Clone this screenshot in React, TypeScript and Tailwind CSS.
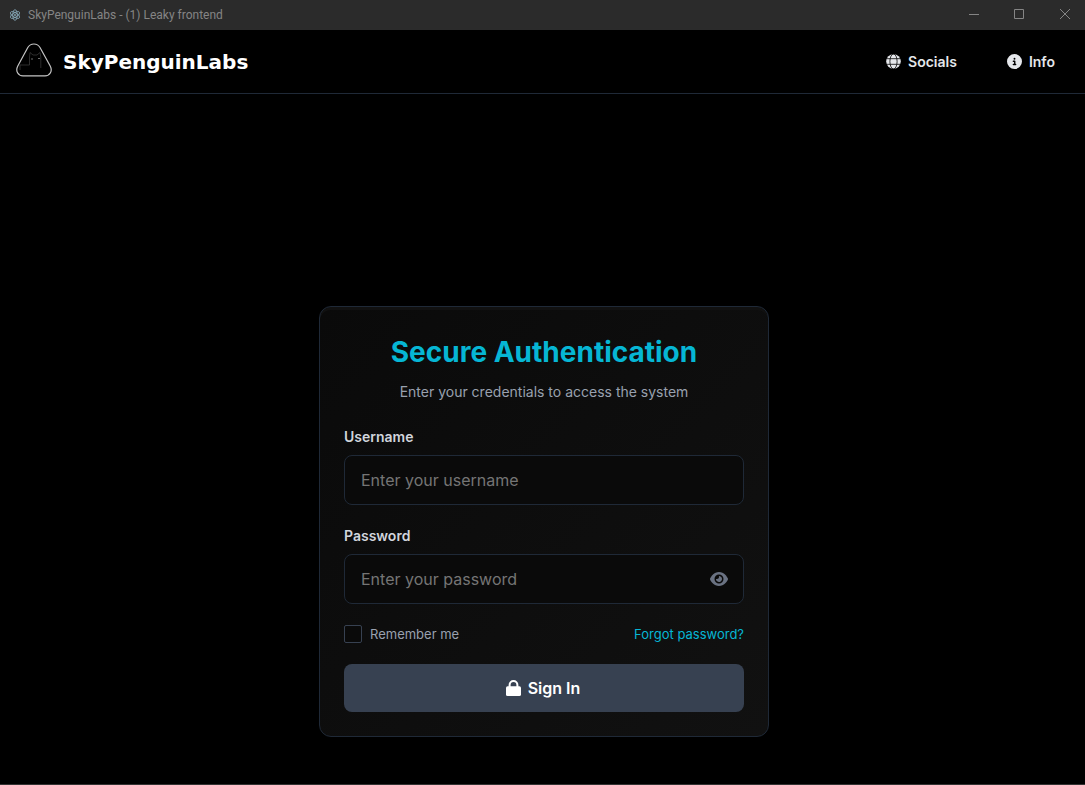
import { useState } from 'react';
import { FaCircleInfo, FaEye } from 'react-icons/fa6';

function AppIcon() {
  return (
    <svg width="12" height="12" viewBox="0 0 24 24" fill="none" stroke="#8fb3c4" strokeWidth="1.5" aria-hidden="true">
      <ellipse cx="12" cy="12" rx="10.5" ry="4.4" transform="rotate(30 12 12)" />
      <ellipse cx="12" cy="12" rx="10.5" ry="4.4" transform="rotate(90 12 12)" />
      <ellipse cx="12" cy="12" rx="10.5" ry="4.4" transform="rotate(150 12 12)" />
      <circle cx="12" cy="12" r="1.2" fill="#8fb3c4" />
    </svg>
  );
}

function GlobeIcon() {
  return (
    <svg width="15" height="15" viewBox="0 0 15 15" fill="none" aria-hidden="true">
      <circle cx="7.5" cy="7.5" r="7.3" fill="currentColor" />
      <g stroke="#000000" strokeWidth=".8">
        <ellipse cx="7.5" cy="7.5" rx="3.6" ry="7.5" />
        <path d="M0 4.7h15M0 10.300h15" />
      </g>
    </svg>
  );
}

function LockIcon() {
  return (
    <svg width="15" height="16" viewBox="0 0 15 16" fill="none" aria-hidden="true">
      <path d="M3.600 7V4.900a3.900 3.900 0 0 1 7.800 0V7" stroke="currentColor" strokeWidth="2" />
      <rect y="6.200" width="15" height="9.800" rx="1.600" fill="currentColor" />
    </svg>
  );
}

function TitleBar() {
  return (
    <div className="flex h-[30px] shrink-0 items-center justify-between bg-[#2b2b2b] font-['Roboto',sans-serif] text-[#858585]">
      <div className="flex items-center gap-[7px] pl-[9px]">
        <AppIcon />
        <span className="text-[12px] leading-[16px]">SkyPenguinLabs - (1) Leaky frontend</span>
      </div>
      <div className="flex h-full">
        <button aria-label="Minimize" className="flex h-full w-[45px] items-center justify-center pb-[2px] pl-[2px]">
          <svg width="10" height="10" viewBox="0 0 10 10" stroke="#858585" fill="none"><path d="M0 5.5h10" /></svg>
        </button>
        <button aria-label="Maximize" className="flex h-full w-[45px] items-center justify-center pb-[2px] pl-[2px]">
          <svg width="10" height="10" viewBox="0 0 10 10" stroke="#858585" fill="none"><path d="M.5.5h9v9h-9z" /></svg>
        </button>
        <button aria-label="Close" className="flex h-full w-[45px] items-center justify-center pb-[2px] pl-[4px]">
          <svg width="10" height="10" viewBox="0 0 10 10" stroke="#858585" fill="none"><path d="M0 0l10 10M10 0L0 10" /></svg>
        </button>
      </div>
    </div>
  );
}

function Logo() {
  return (
    <svg width="36" height="34" viewBox="0 0 36 34" fill="none" aria-hidden="true">
      <path
        d="M11.8 4.5C14.6-.2 21.2-.2 24 4.5L34.2 23C36.8 28 34 32.8 29 32.8H7C2 32.8-.8 28 1.8 23z"
        stroke="#c4c4c4"
        strokeWidth="1.2"
      />
      <path d="M4 27v-5h9.500v-8l.5-4.500 3 2.500h4l3-2.500.8 4.500v11" stroke="#383838" strokeWidth=".8" />
      <path d="M15 16h2M22 15.500h2" stroke="#6c6c6c" strokeWidth="1.2" />
    </svg>
  );
}

function Header() {
  return (
    <header className="flex h-16 shrink-0 items-center justify-between border-b border-[#1f2937] pr-[30px] pl-4">
      <a href="#home" className="flex items-center gap-[11px] pb-[3px] text-white">
        <Logo />
        <span className="pt-[3px] font-['DejaVu_Sans',sans-serif] text-[20px] leading-[28px] font-bold">SkyPenguinLabs</span>
      </a>
      <nav className="flex items-center gap-[50px] text-[14px] leading-[20px] font-semibold text-gray-200">
        <a href="#socials" className="flex items-center gap-[7px]">
          <GlobeIcon />
          Socials
        </a>
        <a href="#info" className="flex items-center gap-[7px]">
          <FaCircleInfo size={15} />
          Info
        </a>
      </nav>
    </header>
  );
}

const inputClass =
  'h-[50px] w-full rounded-lg border border-[#1f2937] bg-[#0a0a0a] px-4 text-[16px] leading-[24px] text-gray-200 placeholder:text-[#757575] outline-none focus:border-[#06b6d4]';
const labelClass = 'mb-2 block text-[14px] leading-[20px] font-semibold text-gray-300';

export default function App() {
  const [visible, setVisible] = useState(false);
  return (
    <div className="flex min-h-screen flex-col border-b border-[#333333] bg-black font-['Inter',sans-serif]">
      <TitleBar />
      <Header />
      <main className="flex flex-1 flex-col items-center justify-end pb-[47px] pl-[3px]">
        <section className="w-full max-w-[450px] rounded-xl border border-[#1f2937] bg-linear-135 from-[#0a0a0a] to-[#111111] p-6 shadow-[inset_0_3px_0_#111111]">
          <h1 className="pt-[3px] text-center text-[28px] leading-[36px] font-bold text-[#06b6d4]">Secure Authentication</h1>
          <p className="mt-[11px] mb-6 text-center text-[14px] leading-[22px] text-gray-400">
            Enter your credentials to access the system
          </p>
          <form onSubmit={(e) => e.preventDefault()}>
            <div className="mb-[21px]">
              <label htmlFor="username" className={labelClass}>Username</label>
              <input id="username" type="text" placeholder="Enter your username" className={inputClass} />
            </div>
            <div className="mb-5">
              <label htmlFor="password" className={labelClass}>Password</label>
              <div className="relative">
                <input
                  id="password"
                  type={visible ? 'text' : 'password'}
                  placeholder="Enter your password"
                  className={inputClass}
                />
                <button
                  type="button"
                  aria-label="Show password"
                  onClick={() => setVisible(!visible)}
                  className="absolute inset-y-0 right-4 flex items-center text-gray-500"
                >
                  <FaEye size={18} />
                </button>
              </div>
            </div>
            <div className="mb-5 flex items-center justify-between text-[13px] leading-[20px]">
              <label className="flex items-center gap-2 text-gray-400">
                <input
                  type="checkbox"
                  className="size-[18px] appearance-none rounded-[2px] border border-[#374151] bg-[#0a0a0a] checked:bg-[#06b6d4]"
                />
                Remember me
              </label>
              <a href="#forgot" className="text-[#06b6d4]">Forgot password?</a>
            </div>
            <button
              type="submit"
              className="flex h-12 w-full items-center justify-center gap-[7px] rounded-lg bg-[#374151] pr-[2px] text-[16px] leading-[24px] font-semibold text-white"
            >
              <LockIcon />
              Sign In
            </button>
          </form>
        </section>
      </main>
    </div>
  );
}
